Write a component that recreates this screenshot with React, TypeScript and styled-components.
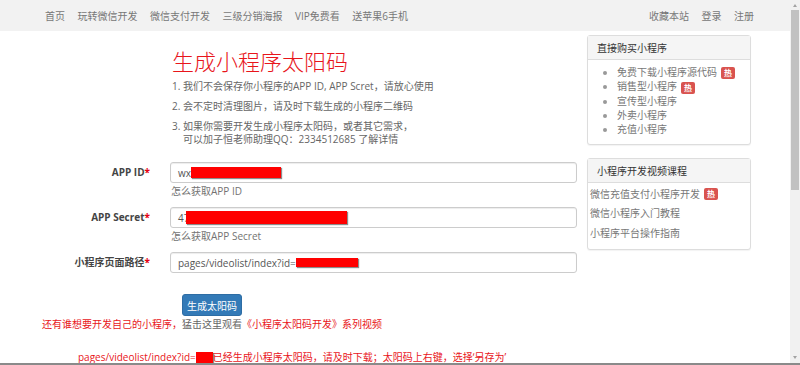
import React from 'react';
import styled, { createGlobalStyle } from 'styled-components';

const GlobalStyle = createGlobalStyle`
  html, body {
    margin: 0;
    padding: 0;
    background: #fff;
  }
  body {
    font-family: "Open Sans", "Noto Sans CJK SC", sans-serif;
    font-size: 10px;
    color: #555;
  }
`;

const Frame = styled.div`
  width: 800px;
  height: 365px;
  box-sizing: border-box;
  border-bottom: 2px solid #8a8a8a;
  display: flex;
  overflow: hidden;
`;

const Main = styled.div`
  flex: 1;
  display: flex;
  flex-direction: column;
  min-width: 0;
`;

const Navbar = styled.div`
  height: 31px;
  flex-shrink: 0;
  background: #f2f2f2;
  display: flex;
  align-items: center;
  padding: 0 36px 0 45px;
`;

const NavGroup = styled.div<{ $right?: boolean }>`
  display: flex;
  gap: 12.5px;
  margin-left: ${(p) => (p.$right ? 'auto' : '0')};
`;

const NavLink = styled.a`
  color: #777;
  font-size: 10px;
  line-height: 14px;
  text-decoration: none;
  white-space: nowrap;
`;

const Body = styled.div`
  display: flex;
  gap: 10px;
`;

const Content = styled.div`
  width: 577px;
  flex-shrink: 0;
`;

const Intro = styled.div`
  padding-left: 172px;
  margin-top: 17px;
`;

const Title = styled.h1`
  margin: 0 0 6px;
  font-size: 22px;
  line-height: 26px;
  font-weight: 300;
  color: #e8151b;
`;

const Notes = styled.div`
  display: flex;
  flex-direction: column;
  gap: 7px;
`;

const Note = styled.div`
  display: flex;
  line-height: 13px;
  color: #666;
`;

const NoteNum = styled.span`
  width: 11px;
  flex-shrink: 0;
`;

const Form = styled.div`
  margin-top: 16px;
  display: grid;
  grid-template-columns: 150px 407px;
  column-gap: 20px;
  row-gap: 10px;
`;

const Label = styled.div`
  text-align: right;
  font-weight: bold;
  color: #444;
  line-height: 21px;
  white-space: nowrap;
`;

const Star = styled.span`
  color: #e60012;
`;

const Field = styled.div`
  display: flex;
  flex-direction: column;
`;

const Input = styled.div`
  height: 21px;
  box-sizing: border-box;
  border: 1px solid #ccc;
  border-radius: 3px;
  box-shadow: inset 0 1px 1px rgba(0, 0, 0, 0.075);
  padding: 0 7px;
  display: flex;
  align-items: center;
  color: #555;
  white-space: nowrap;
`;

const Redact = styled.span<{ $w: number; $h: number; $shift?: number }>`
  display: inline-block;
  width: ${(p) => p.$w}px;
  height: ${(p) => p.$h}px;
  margin-left: ${(p) => p.$shift ?? 0}px;
  background: #ff0000;
  box-shadow: 1px 1px 1px rgba(0, 0, 0, 0.45);
  vertical-align: middle;
`;

const Help = styled.div`
  color: #737373;
  line-height: 12px;
  margin-top: 2px;
  padding-left: 1px;
`;

const ButtonRow = styled.div`
  padding-left: 182px;
  margin-top: 21px;
`;

const Button = styled.button`
  width: 60px;
  height: 22px;
  border: 1px solid #2e6da4;
  border-radius: 3px;
  background: #337ab7;
  color: #fff;
  font-family: inherit;
  font-size: 10px;
  padding: 0;
`;

const Notice = styled.div<{ $indent: number; $gap: number }>`
  padding-left: ${(p) => p.$indent}px;
  margin-top: ${(p) => p.$gap}px;
  color: #e8151b;
  line-height: 12px;
  white-space: nowrap;
`;

const GrayLink = styled.a`
  color: #666;
  text-decoration: none;
`;

const Sidebar = styled.div`
  width: 164px;
  flex-shrink: 0;
  padding-top: 4px;
  display: flex;
  flex-direction: column;
  gap: 13px;
`;

const Panel = styled.div`
  border: 1px solid #ddd;
  border-radius: 3px;
  box-shadow: 0 1px 1px rgba(0, 0, 0, 0.05);
  background: #fff;
`;

const PanelHeading = styled.div`
  height: 24px;
  box-sizing: border-box;
  background: #f5f5f5;
  border-bottom: 1px solid #ddd;
  padding-left: 9px;
  display: flex;
  align-items: center;
  color: #333;
  font-size: 10px;
`;

const BulletList = styled.ul`
  margin: 0;
  padding: 5px 0 8px 29px;
  color: #999;
`;

const BulletItem = styled.li`
  line-height: 14px;
  color: #999;

  span.text {
    color: #777;
  }
`;

const LinkList = styled.div`
  padding: 2px 0 6px 2px;
`;

const LinkItem = styled.div`
  line-height: 19.5px;
  color: #777;
  display: flex;
  align-items: center;
`;

const Hot = styled.span`
  display: inline-block;
  margin-left: 4px;
  background: #d9534f;
  color: #fff;
  font-size: 8px;
  font-weight: bold;
  line-height: 12px;
  padding: 0 3px;
  border-radius: 2px;
  vertical-align: middle;
`;

const Scrollbar = styled.div`
  width: 10px;
  flex-shrink: 0;
  background: #f1f1f1;
  display: flex;
  flex-direction: column;
  align-items: center;
`;

const Arrow = styled.div<{ $down?: boolean }>`
  width: 0;
  height: 0;
  margin: 4px 0 3px;
  border-left: 2.5px solid transparent;
  border-right: 2.5px solid transparent;
  ${(p) =>
    p.$down
      ? 'border-top: 3px solid #a3a3a3; margin-top: auto; margin-bottom: 4px;'
      : 'border-bottom: 3px solid #a3a3a3;'}
`;

const Thumb = styled.div`
  width: 8px;
  height: 180px;
  background: #c1c1c1;
`;

const navLeft = ['首页', '玩转微信开发', '微信支付开发', '三级分销海报', 'VIP免费看', '送苹果6手机'];
const navRight = ['收藏本站', '登录', '注册'];

const buyItems: { name: string; hot?: boolean }[] = [
  { name: '免费下载小程序源代码', hot: true },
  { name: '销售型小程序', hot: true },
  { name: '宣传型小程序' },
  { name: '外卖小程序' },
  { name: '充值小程序' },
];

const courseItems: { name: string; hot?: boolean }[] = [
  { name: '微信充值支付小程序开发', hot: true },
  { name: '微信小程序入门教程' },
  { name: '小程序平台操作指南' },
];

const App: React.FC = () => {
  return (
    <>
      <GlobalStyle />
      <Frame>
        <Main>
          <Navbar>
            <NavGroup>
              {navLeft.map((n) => (
                <NavLink key={n}>{n}</NavLink>
              ))}
            </NavGroup>
            <NavGroup $right>
              {navRight.map((n) => (
                <NavLink key={n}>{n}</NavLink>
              ))}
            </NavGroup>
          </Navbar>

          <Body>
            <Content>
              <Intro>
                <Title>生成小程序太阳码</Title>
                <Notes>
                  <Note>
                    <NoteNum>1.</NoteNum>
                    <span>我们不会保存你小程序的APP ID, APP Scret，请放心使用</span>
                  </Note>
                  <Note>
                    <NoteNum>2.</NoteNum>
                    <span>会不定时清理图片，请及时下载生成的小程序二维码</span>
                  </Note>
                  <Note>
                    <NoteNum>3.</NoteNum>
                    <span>
                      如果你需要开发生成小程序太阳码，或者其它需求，
                      <br />
                      可以加子恒老师助理QQ：2334512685 了解详情
                    </span>
                  </Note>
                </Notes>
              </Intro>

              <Form>
                <Label>
                  APP ID<Star>*</Star>
                </Label>
                <Field>
                  <Input>
                    wx
                    <Redact $w={90} $h={11} />
                  </Input>
                  <Help>怎么获取APP ID</Help>
                </Field>

                <Label>
                  APP Secret<Star>*</Star>
                </Label>
                <Field>
                  <Input>
                    47
                    <Redact $w={161} $h={13} $shift={-3} />
                  </Input>
                  <Help>怎么获取APP Secret</Help>
                </Field>

                <Label>
                  小程序页面路径<Star>*</Star>
                </Label>
                <Field>
                  <Input>
                    pages/videolist/index?id=
                    <Redact $w={62} $h={9} />
                  </Input>
                </Field>
              </Form>

              <ButtonRow>
                <Button>生成太阳码</Button>
              </ButtonRow>

              <Notice $indent={42} $gap={2}>
                还有谁想要开发自己的小程序，<GrayLink>猛击这里观看</GrayLink>《小程序太阳码开发》系列视频
              </Notice>

              <Notice $indent={78} $gap={21}>
                pages/videolist/index?id=
                <Redact $w={17} $h={13} />
                已经生成小程序太阳码，请及时下载；太阳码上右键，选择‘另存为’
              </Notice>
            </Content>

            <Sidebar>
              <Panel>
                <PanelHeading>直接购买小程序</PanelHeading>
                <BulletList>
                  {buyItems.map((it) => (
                    <BulletItem key={it.name}>
                      <span className="text">{it.name}</span>
                      {it.hot && <Hot>热</Hot>}
                    </BulletItem>
                  ))}
                </BulletList>
              </Panel>
              <Panel>
                <PanelHeading>小程序开发视频课程</PanelHeading>
                <LinkList>
                  {courseItems.map((it) => (
                    <LinkItem key={it.name}>
                      {it.name}
                      {it.hot && <Hot>热</Hot>}
                    </LinkItem>
                  ))}
                </LinkList>
              </Panel>
            </Sidebar>
          </Body>
        </Main>

        <Scrollbar>
          <Arrow />
          <Thumb />
          <Arrow $down />
        </Scrollbar>
      </Frame>
    </>
  );
};

export default App;
